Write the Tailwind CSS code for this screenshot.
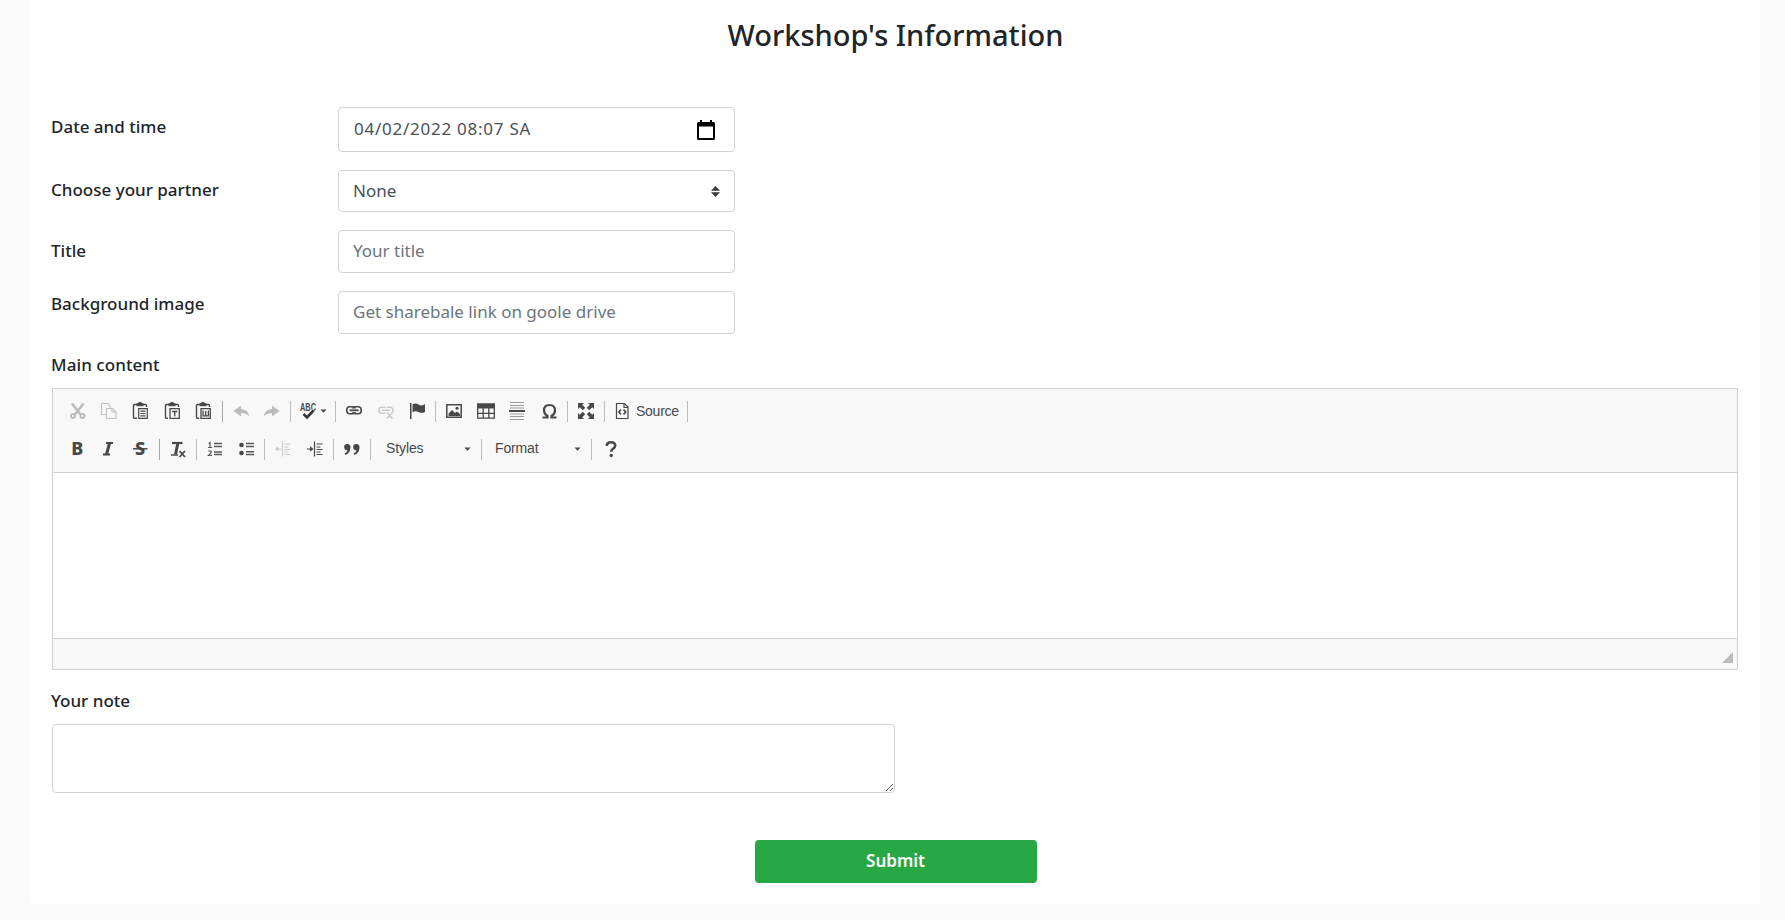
<!DOCTYPE html>
<html lang="en">
<head>
<meta charset="utf-8">
<title>Workshop's Information</title>
<script src="https://cdn.jsdelivr.net/npm/@tailwindcss/browser@4"></script>
</head>
<body class="bg-[#fafafa] h-[920px] overflow-hidden pl-[30px] pr-[25px] font-['Noto_Sans',sans-serif] text-[17px] text-[#212529]">
<main class="bg-white h-[904px] rounded-b pl-[22px] pr-[21px] flex flex-col">
  <h1 class="text-center font-medium text-[29px] leading-[36px] pt-[17px] h-[107px]">Workshop's Information</h1>

  <form class="flex flex-col">
    <div class="flex h-[45px]">
      <label class="w-[287px] -ml-px font-medium leading-[24px] pt-[8px]">Date and time</label>
      <div class="w-[397px] h-full border border-[#ced4da] rounded flex items-center justify-between pl-[15px] pr-[19px] text-[#495057]">
        <span class="tracking-[0.75px] pb-[2px]">04/02/2022 08:07 SA</span>
        <svg class="w-[18px] h-5" viewBox="0 0 18 20"><path fill="#000" fill-rule="evenodd" d="M3 0h2v2h8V0h2v2h1.500q1.500 0 1.500 1.500v15q0 1.500-1.500 1.500h-15Q0 20 0 18.500v-15Q0 2 1.500 2H3zM2 6.500V18h14V6.500z"/></svg>
      </div>
    </div>
    <div class="flex h-[42px] mt-[18px]">
      <label class="w-[287px] -ml-px font-medium leading-[24px] pt-[8px]">Choose your partner</label>
      <div class="w-[397px] h-full border border-[#ced4da] rounded flex items-center justify-between pl-[14px] pr-[14px] text-[#495057]">
        <span class="pb-px">None</span>
        <svg class="w-[9px] h-[11px]" viewBox="0 0 9 11"><path fill="#343a40" d="M0 4.700h9L4.500 0zM0 6.300h9L4.500 11z"/></svg>
      </div>
    </div>
    <div class="flex h-[43px] mt-[18px]">
      <label class="w-[287px] -ml-px font-medium leading-[24px] pt-[9px]">Title</label>
      <div class="w-[397px] h-full border border-[#ced4da] rounded flex items-center pl-[14px] pb-px text-[#6c757d]">Your title</div>
    </div>
    <div class="flex h-[43px] mt-[18px]">
      <label class="w-[287px] -ml-px font-medium leading-[24px] pt-[1px]">Background image</label>
      <div class="w-[397px] h-full border border-[#ced4da] rounded flex items-center pl-[14px] pb-px text-[#6c757d]">Get sharebale link on goole drive</div>
    </div>

    <label class="-ml-px font-medium leading-[24px] mt-[19px] h-[35px] tracking-[0.07px]">Main content</label>
    <section class="border border-[#d1d1d1] h-[282px] w-[1686px] flex flex-col font-['Liberation_Sans',Arial,sans-serif] text-[14px] text-[#484848]">
      <div class="bg-[#f8f8f8] border-b border-[#d1d1d1] h-[84px] pt-[11px] flex flex-col gap-[16px]">
        <div class="flex items-center h-[22px]">
          <svg class="ml-[15px] w-5 h-5" viewBox="0 0 20 20" fill="none" stroke="#bcbcbc" stroke-width="2"><path d="M4 2.500l8.500 11M15.500 2.500L7 13.500" stroke-width="2.600"/><circle cx="5" cy="15" r="2"/><circle cx="14.500" cy="15" r="2"/></svg>
          <svg class="ml-[11px] w-5 h-5" viewBox="0 0 20 20" fill="#f8f8f8" stroke="#c4c4c4" stroke-width="1.200"><path d="M2.500 2.500h6l3 3v8h-9z"/><path d="M7.500 7.500h6l3.500 3.500v6.500H7.500z"/><path d="M13 7.500V11h4" fill="none"/></svg>
          <svg class="ml-[12px] w-5 h-5" viewBox="0 0 20 20" fill="none" stroke="#484848" stroke-width="1.400"><path d="M6 17.300H3.500q-1 0-1-1V4.500q0-1 1-1h11q1 0 1 1V6"/><path d="M5.500 2.200h7v3h-7z" fill="#484848" stroke="none"/><path d="M7.500 1h3v2h-3z" fill="#484848" stroke="none"/><path d="M7.700 7.700h8.600v9.600H7.700zM9.500 10.200h5M9.500 12.500h5M9.500 14.800h5" stroke-width="1.200"/></svg>
          <svg class="ml-[12px] w-5 h-5" viewBox="0 0 20 20" fill="none" stroke="#484848" stroke-width="1.400"><path d="M5 17.300H3.500q-1 0-1-1V4.500q0-1 1-1h11q1 0 1 1V6"/><path d="M5.500 2.200h7v3h-7z" fill="#484848" stroke="none"/><path d="M7.500 1h3v2h-3z" fill="#484848" stroke="none"/><path d="M7 7.700h9.300v9.600H7zM9 10.500h5.400M11.700 10.500v5" stroke-width="1.300"/></svg>
          <svg class="ml-[11px] w-5 h-5" viewBox="0 0 20 20" fill="none" stroke="#484848" stroke-width="1.400"><path d="M5 17.300H3.500q-1 0-1-1V4.500q0-1 1-1h11q1 0 1 1V6"/><path d="M5.500 2.200h7v3h-7z" fill="#484848" stroke="none"/><path d="M7.500 1h3v2h-3z" fill="#484848" stroke="none"/><path d="M7 7.700h9.300v9.600H7zM9 9.500v5.300h5.400V9.500M11.700 10v4.500" stroke-width="1.300"/></svg>
          <i class="ml-[8px] w-px h-[21px] bg-[#a8a8a8]"></i>
          <svg class="ml-[9px] w-5 h-5" viewBox="0 0 20 20" fill="#bcbcbc"><path d="M1.500 10L9 4.500V8q7.500.5 8.500 7.500Q14.500 12 9 12v3.500z"/></svg>
          <svg class="ml-[10px] w-5 h-5" viewBox="0 0 20 20" fill="#bcbcbc"><path d="M17.500 10L10 4.500V8Q2.500 8.500 1.500 15.500 4.500 12 10 12v3.500z"/></svg>
          <i class="ml-[8px] w-px h-[21px] bg-[#bcbcbc]"></i>
          <svg class="ml-[7px] w-5 h-5" viewBox="0 0 20 20"><text x="2" y="10" font-family="Liberation Sans" font-weight="700" font-size="10.500" textLength="16" lengthAdjust="spacingAndGlyphs" fill="#484848">ABC</text><path d="M5.500 13l3.500 3.500 7-7" fill="none" stroke="#f8f8f8" stroke-width="4.500"/><path d="M5.500 13l3.500 3.500 6.500-7" fill="none" stroke="#333" stroke-width="2.600"/></svg>
          <svg class="ml-[2px] w-[7px] h-1" viewBox="0 0 7 4"><path d="M0.500 0.500h6l-3 3.200z" fill="#484848"/></svg>
          <i class="ml-[8px] w-px h-[21px] bg-[#bcbcbc]"></i>
          <svg class="ml-[8px] w-5 h-5" viewBox="0 0 20 20" fill="none" stroke="#484848" stroke-width="1.600"><rect x="2.800" y="5.800" width="8.500" height="7" rx="3"/><rect x="8.700" y="5.800" width="8.500" height="7" rx="3"/><path d="M6 9.300h8" stroke="#f8f8f8" stroke-width="3.600"/><path d="M5.500 9.300h9" stroke-width="1.800"/></svg>
          <svg class="ml-[12px] w-5 h-5" viewBox="0 0 20 20" fill="none" stroke="#cacaca" stroke-width="1.600"><path d="M9.500 12.300H5.800a3 3 0 0 1 0-6H9.500M10.500 6.300h3.700a3 3 0 0 1 2.500 4.500M6 9.300h8M11 11.500l5.500 6M16.500 11.500L11 17.500"/></svg>
          <svg class="ml-[12px] w-5 h-5" viewBox="0 0 20 20" fill="#484848"><path d="M2 2h1.500v16H2zM4.500 3.500q3-2 6 0t6.500-.500v8q-3 1.700-6.500 0t-6 .5z"/></svg>
          <i class="ml-[7px] w-px h-[21px] bg-[#bcbcbc]"></i>
          <svg class="ml-[8px] w-5 h-5" viewBox="0 0 20 20"><path d="M2.800 3.800h14.400v12.400H2.800z" fill="none" stroke="#484848" stroke-width="1.500"/><path d="M4.500 15v-2.500L8 9l3 3 2-1.500 3 2.500v2z" fill="#484848"/><circle cx="13" cy="7.200" r="1.500" fill="#484848"/></svg>
          <svg class="ml-[12px] w-5 h-5" viewBox="0 0 20 20" fill="none" stroke="#484848" stroke-width="1.300"><path d="M1.700 3.200h16.600v14H1.700zM1.700 12.300h16.600M7.200 7v10M12.800 7v10"/><path d="M1 2.500h18v5H1z" fill="#484848" stroke="none"/></svg>
          <svg class="ml-[11px] w-5 h-5" viewBox="0 0 20 20" stroke="#9b9b9b"><path d="M3 1.500h14M3 4.500h14M3 7h14M3 13h14M3 15.500h14M3 18.500h14"/><path d="M2 10h16" stroke="#484848" stroke-width="2"/></svg>
          <svg class="ml-[13px] w-5 h-5" viewBox="0 0 20 20"><path d="M2.500 16.500h5v-1.600Q4 13 4 9.500 4 4 9.500 4T15 9.500q0 3.500-3.500 5.400v1.600h5" fill="none" stroke="#484848" stroke-width="2.200"/></svg>
          <i class="ml-[7px] w-px h-[21px] bg-[#bcbcbc]"></i>
          <svg class="ml-[8px] w-5 h-5" viewBox="0 0 20 20" fill="#484848"><path d="M2 2h6L6.200 3.800l3 3-2.400 2.400-3-3L2 8zM18 2v6l-1.800-1.800-3 3-2.400-2.400 3-3L12 2zM2 18v-6l1.800 1.800 3-3 2.400 2.400-3 3L8 18zM18 18h-6l1.800-1.800-3-3 2.400-2.400 3 3L18 12z"/></svg>
          <i class="ml-[8px] w-px h-[21px] bg-[#bcbcbc]"></i>
          <svg class="ml-[7px] w-5 h-5" viewBox="0 0 20 20" fill="none" stroke="#484848" stroke-width="1.200"><path d="M4.500 2.500h8l3.500 3.500v11.500H4.500z"/><path d="M12 2.500V6.500h4"/><path d="M9 8.500L6.800 11 9 13.500M11.500 8.500l2.200 2.500-2.200 2.500" stroke-width="1.700"/></svg>
          <span class="ml-[4px] w-[43px] leading-[22px] whitespace-nowrap tracking-[-0.25px]">Source</span>
          <i class="ml-[8px] w-px h-[21px] bg-[#bcbcbc]"></i>
        </div>
        <div class="flex items-center h-[22px]">
          <svg class="ml-[14px] w-5 h-5" viewBox="0 0 20 20"><text x="10.300" y="16.300" text-anchor="middle" font-family="Noto Sans" font-weight="800" font-size="18" fill="#484848">B</text></svg>
          <svg class="ml-[11px] w-5 h-5" viewBox="0 0 20 20"><path d="M8 4h7M5 15.500h7" fill="none" stroke="#484848" stroke-width="2"/><path d="M11.700 3.500l-3.200 12" stroke="#484848" stroke-width="3"/></svg>
          <svg class="ml-[12px] w-5 h-5" viewBox="0 0 20 20"><text x="10" y="16.300" text-anchor="middle" font-family="Noto Sans" font-weight="800" font-size="18" fill="#484848">S</text><path d="M3 9.800h14.500" stroke="#484848" stroke-width="1.500"/></svg>
          <i class="ml-[9px] w-px h-[21px] bg-[#a8a8a8]"></i>
          <svg class="ml-[8px] w-5 h-5" viewBox="0 0 20 20" fill="none" stroke="#484848"><path d="M4 4h10.500" stroke-width="2.200"/><path d="M10 3.500l-2.500 12" stroke-width="3"/><path d="M3 16h7" stroke-width="1.500"/><path d="M11.500 12l5.500 6M17 12l-5.500 6" stroke-width="1.800"/></svg>
          <i class="ml-[8px] w-px h-[21px] bg-[#bcbcbc]"></i>
          <svg class="ml-[8px] w-5 h-5" viewBox="0 0 20 20" stroke="#585858" fill="none"><path d="M3.500 4.500l1.500-1v5M3 8.500h4M3.200 12h2.800v2L3.500 16.500h3.500" stroke-width="1.200"/><path d="M9 4.500h8M9 7.500h8M9 13h8M9 15.500h8" stroke-width="1.500"/></svg>
          <svg class="ml-[12px] w-5 h-5" viewBox="0 0 20 20" stroke="#585858" fill="none"><circle cx="4.500" cy="6" r="2.300" fill="#484848" stroke="none"/><circle cx="4.500" cy="14" r="2.300" fill="#484848" stroke="none"/><path d="M9 4.500h8M9 7.500h8M9 12.800h8M9 15.500h8" stroke-width="1.500"/></svg>
          <i class="ml-[7px] w-px h-[21px] bg-[#bcbcbc]"></i>
          <svg class="ml-[8px] w-5 h-5" viewBox="0 0 20 20" stroke="#c8c8c8" fill="none"><path d="M9.500 2.500v15M11.500 5h6M11.500 8h4M11.500 10.500h6M11.500 13h4M11.500 15.500h6M3 10h5" stroke-width="1.200"/><path d="M5 7.500L2 10l3 2.500z" fill="#c8c8c8" stroke="none"/></svg>
          <svg class="ml-[12px] w-5 h-5" viewBox="0 0 20 20" stroke="#484848" fill="none"><path d="M9.500 2.500v15M11.500 5h6M11.500 8h4M11.500 10.500h6M11.500 13h4M11.500 15.500h6M2 10h5" stroke-width="1.200"/><path d="M5 7.200L8.500 10 5 12.800z" fill="#484848" stroke="none"/></svg>
          <i class="ml-[8px] w-px h-[21px] bg-[#bcbcbc]"></i>
          <svg class="ml-[8px] w-5 h-5" viewBox="0 0 20 20" fill="#484848"><path d="M5 5a3 3 0 0 1 3.500 3.200Q8.500 14 3.500 16l-1-1.500Q5 13.500 5.500 11.200A3 3 0 0 1 5 5zM14 5a3 3 0 0 1 3.500 3.200Q17.500 14 12.500 16l-1-1.500q2.500-1 3-3.300A3 3 0 0 1 14 5z"/></svg>
          <i class="ml-[8px] w-px h-[21px] bg-[#bcbcbc]"></i>
          <span class="ml-[15px] w-[37px] whitespace-nowrap -mt-[2px] tracking-[-0.1px]">Styles</span>
          <svg class="ml-[41px] w-[7px] h-1" viewBox="0 0 7 4"><path d="M0.500 0.500h6l-3 3.200z" fill="#484848"/></svg>
          <i class="ml-[10px] w-px h-[21px] bg-[#bcbcbc]"></i>
          <span class="ml-[13px] w-[43px] whitespace-nowrap -mt-[2px] tracking-[-0.15px]">Format</span>
          <svg class="ml-[36px] w-[7px] h-1" viewBox="0 0 7 4"><path d="M0.500 0.500h6l-3 3.200z" fill="#484848"/></svg>
          <i class="ml-[10px] w-px h-[21px] bg-[#bcbcbc]"></i>
          <svg class="ml-[9px] w-5 h-5" viewBox="0 0 20 20"><path d="M5.800 7Q5.800 3.200 10 3.200t4.200 3.400q0 2-2.200 3.200-1.800 1-1.800 3" fill="none" stroke="#484848" stroke-width="2.600"/><circle cx="10.200" cy="16.500" r="1.700" fill="#484848"/></svg>
        </div>
      </div>
      <div class="flex-1"></div>
      <div class="h-[31px] border-t border-[#d1d1d1] bg-[#f8f8f8] flex justify-end items-end pr-[4px] pb-[6px]"><svg class="w-[11px] h-[11px]" viewBox="0 0 11 11"><path d="M11 0v11H0z" fill="#bcbcbc"/></svg></div>
    </section>

    <label class="-ml-px font-medium leading-[24px] mt-[19px] h-[35px]">Your note</label>
    <textarea class="w-[843px] h-[69px] border border-[#ced4da] rounded resize block bg-white"></textarea>
    <button type="button" class="mt-[47px] mx-auto w-[282px] h-[43px] rounded bg-[#28a745] text-white font-semibold pb-px">Submit</button>
  </form>
</main>
</body>
</html>
